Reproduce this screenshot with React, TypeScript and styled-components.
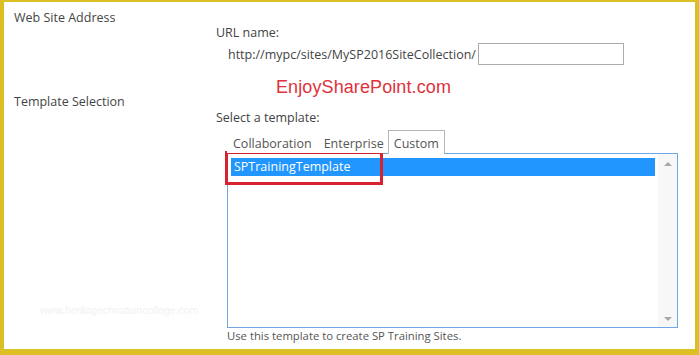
import React from "react";
import styled, { createGlobalStyle } from "styled-components";

const Global = createGlobalStyle`
  html, body { margin: 0; padding: 0; background: #fff; }
  body { font-family: "Open Sans", "Noto Sans", sans-serif; }
`;

const Frame = styled.div`
  box-sizing: border-box;
  width: 699px;
  height: 355px;
  border-style: solid;
  border-color: #dcbf24;
  border-width: 2px 4px 6px 4px;
  background: #fff;
  position: relative;
  overflow: hidden;
  color: #444;
`;

const Section = styled.div<{ $h: number; $pt?: number }>`
  box-sizing: border-box;
  display: flex;
  height: ${(p) => p.$h}px;
  padding-top: ${(p) => p.$pt ?? 0}px;
`;

const SectionTitle = styled.div`
  width: 202px;
  padding-left: 10px;
  font-size: 12.5px;
  line-height: 16px;
`;

const Body = styled.div`
  flex: 1;
  display: flex;
  flex-direction: column;
`;

const Label = styled.div<{ $mt: number }>`
  font-size: 12.5px;
  line-height: 16px;
  margin-top: ${(p) => p.$mt}px;
`;

const UrlRow = styled.div`
  display: flex;
  align-items: center;
  margin-left: 12px;
  margin-top: 2px;
  font-size: 12.5px;
`;

const TextInput = styled.div`
  box-sizing: border-box;
  width: 146px;
  height: 22px;
  border: 1px solid #ababab;
  margin-left: 2px;
`;

const Brand = styled.div`
  font-family: "Liberation Sans", Arial, sans-serif;
  font-size: 18px;
  color: #e0323c;
  margin-left: 60px;
  margin-top: 12px;
  letter-spacing: 0.1px;
`;

const Tabs = styled.div`
  display: flex;
  align-items: flex-end;
  margin-left: 11px;
  margin-top: 4px;
  height: 23px;
`;

const Tab = styled.div<{ $active?: boolean }>`
  box-sizing: border-box;
  font-size: 12.5px;
  padding: 4px 5px 0;
  color: #555;
  border: 1px solid ${(p) => (p.$active ? "#b5b5b5" : "transparent")};
  border-bottom: none;
  background: #fff;
  position: relative;
  z-index: 1;
  margin-left: ${(p) => (p.$active ? "-2px" : "0")};
  margin-bottom: ${(p) => (p.$active ? "-1px" : "0")};
  height: ${(p) => (p.$active ? "24px" : "23px")};
`;

const ListBox = styled.div`
  box-sizing: border-box;
  margin-left: 11px;
  width: 451px;
  height: 175px;
  border: 1px solid #6ea6e8;
  display: flex;
  position: relative;
`;

const Items = styled.div`
  flex: 1;
  padding: 4px 3px;
`;

const Item = styled.div<{ $selected?: boolean }>`
  height: 18px;
  line-height: 18px;
  padding-left: 3px;
  font-size: 12.5px;
  color: ${(p) => (p.$selected ? "#fff" : "#444")};
  background: ${(p) => (p.$selected ? "#2196ff" : "transparent")};
`;

const Scroll = styled.div`
  width: 19px;
  background: #f7f7f7;
  display: flex;
  flex-direction: column;
  justify-content: space-between;
  align-items: center;
  padding: 8px 0 6px;
  box-sizing: border-box;
`;

const Arrow = styled.div<{ $down?: boolean }>`
  width: 0;
  height: 0;
  border-left: 4px solid transparent;
  border-right: 4px solid transparent;
  ${(p) =>
    p.$down
      ? "border-top: 4px solid #a8a8a8;"
      : "border-bottom: 4px solid #a8a8a8;"}
`;

const Highlight = styled.div`
  position: absolute;
  left: -3px;
  top: -3px;
  width: 158px;
  height: 34px;
  box-sizing: border-box;
  border: 3px solid #d7232f;
  pointer-events: none;
`;

const Hint = styled.div`
  margin-left: 11px;
  margin-top: 0;
  font-size: 11.3px;
  line-height: 15px;
  color: #555;
`;

const Watermark = styled.div`
  position: absolute;
  left: 36px;
  top: 302px;
  font-size: 10.5px;
  color: #f1f1f1;
  font-family: "Liberation Sans", Arial, sans-serif;
`;

export default function App() {
  return (
    <>
      <Global />
      <Frame>
        <Section $h={92} $pt={8}>
          <SectionTitle>Web Site Address</SectionTitle>
          <Body>
            <Label $mt={15}>URL name:</Label>
            <UrlRow>
              http://mypc/sites/MySP2016SiteCollection/
              <TextInput />
            </UrlRow>
            <Brand>EnjoySharePoint.com</Brand>
          </Body>
        </Section>
        <Section $h={255}>
          <SectionTitle>Template Selection</SectionTitle>
          <Body>
            <Label $mt={16}>Select a template:</Label>
            <Tabs>
              <Tab>Collaboration</Tab>
              <Tab>Enterprise</Tab>
              <Tab $active>Custom</Tab>
            </Tabs>
            <ListBox>
              <Items>
                <Item $selected>SPTrainingTemplate</Item>
              </Items>
              <Scroll>
                <Arrow />
                <Arrow $down />
              </Scroll>
              <Highlight />
            </ListBox>
            <Hint>Use this template to create SP Training Sites.</Hint>
          </Body>
        </Section>
        <Watermark>www.heritagechristiancollege.com</Watermark>
      </Frame>
    </>
  );
}
